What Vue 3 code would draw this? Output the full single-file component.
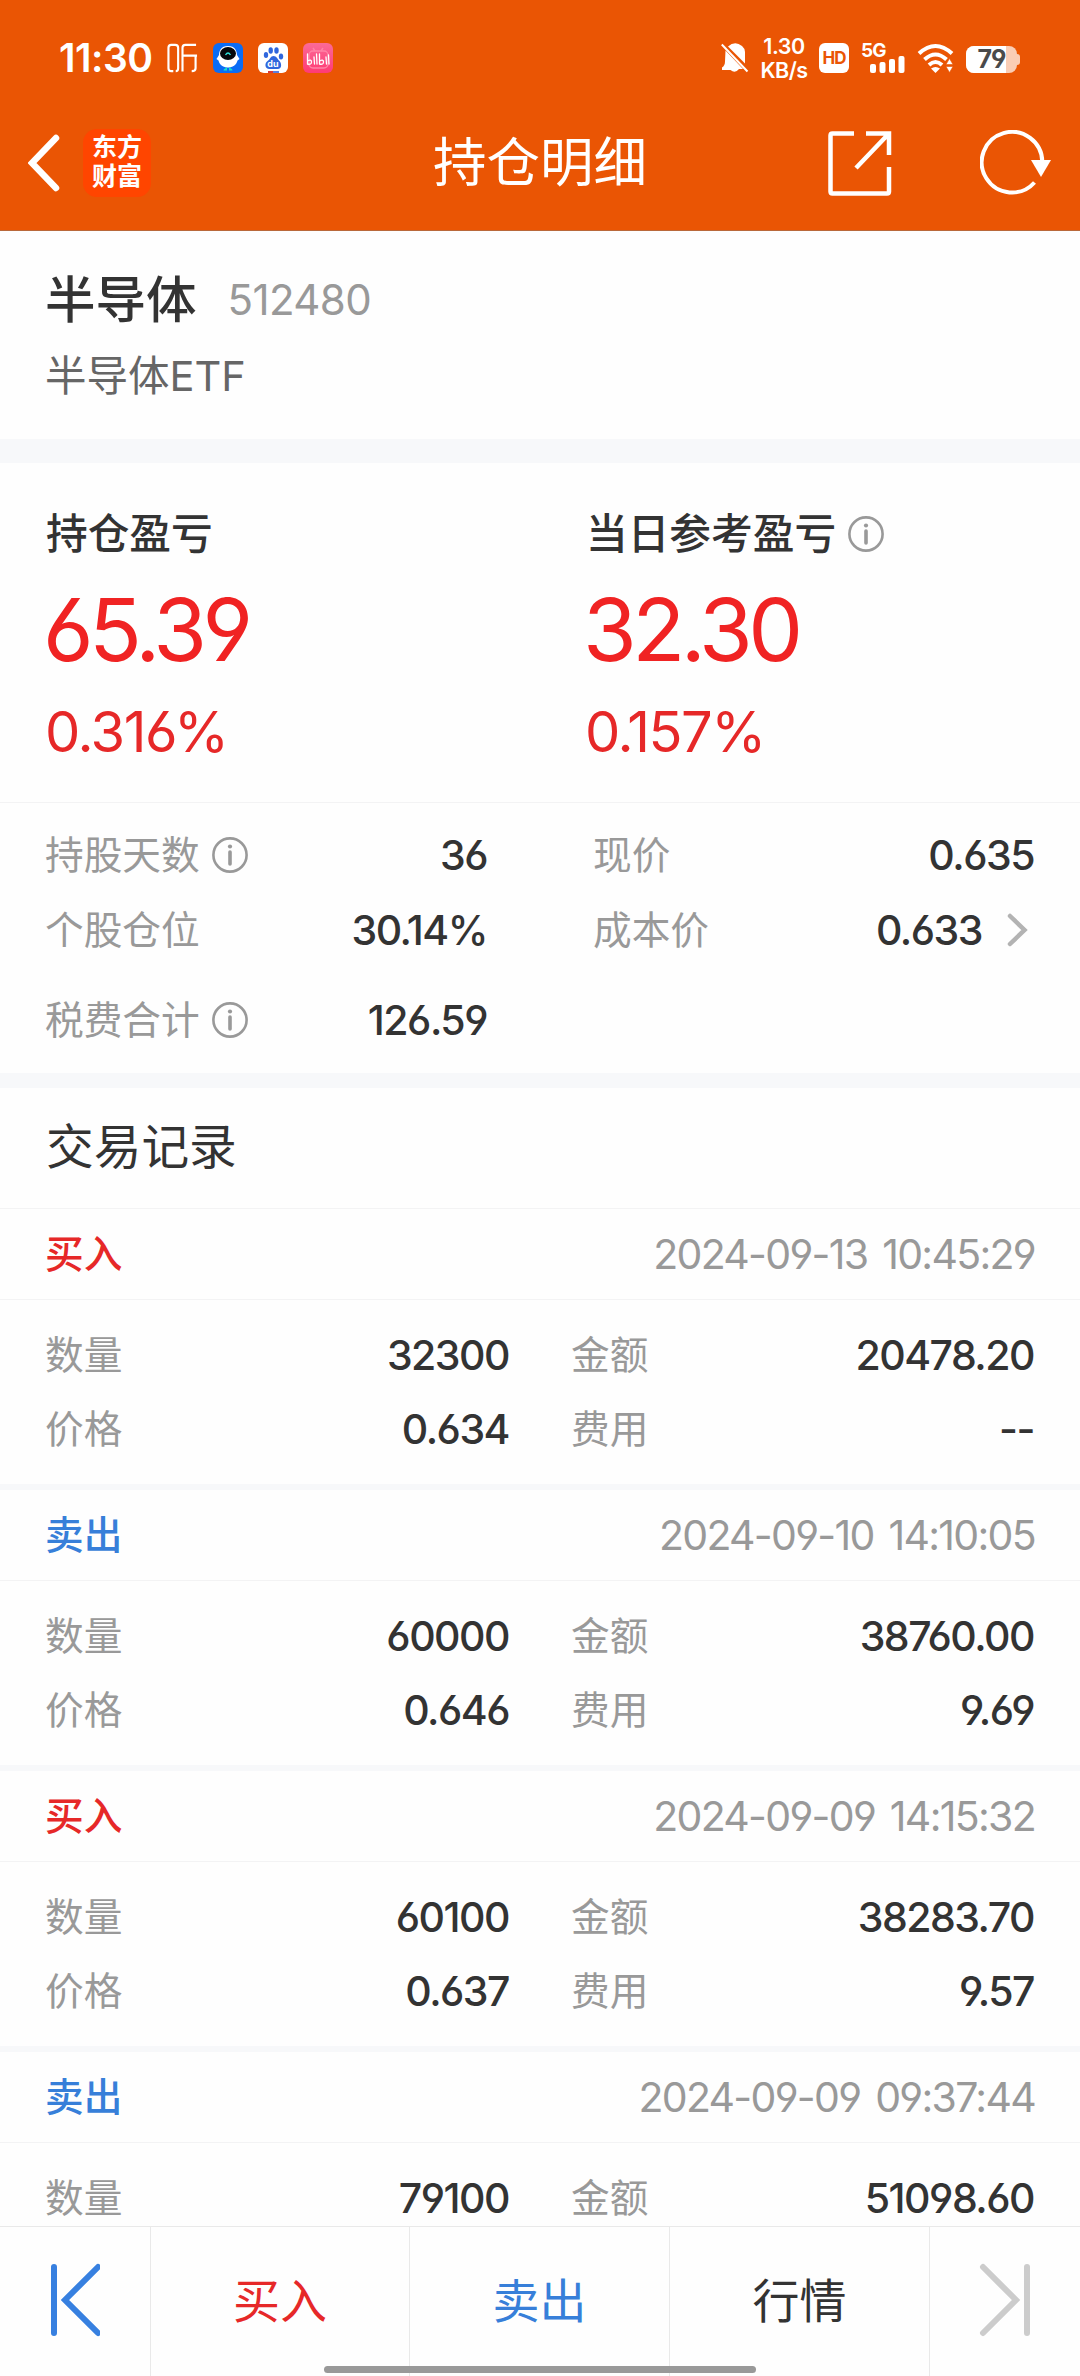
<template>
  <div class="page">
    <header class="header">
      <div class="status-bar">
        <span class="clock">11:30</span>
        <div class="status-apps">
          <svg class="listen" viewBox="0 0 32 30">
            <g fill="none" stroke="#fff" stroke-width="2.200">
              <path d="M4.500 1.500h4q3 0 3 3v21q0 3-2.500 3M4.500 1.500q-3 0-3 3v21q0 3 3 3h2" />
              <path d="M30 1.500H19q-3 0-3 3V29M16 12.500h15M29.500 12.500v13q0 3-4 3" />
            </g>
          </svg>
          <svg class="app-icon" viewBox="0 0 30 30">
            <rect width="30" height="30" rx="6" fill="#0a6cf5" />
            <path d="M15 3c7 0 9 5 9 9l2.500 4-2 1.500c-1 4.500-5 7-9.500 7s-8.500-2.500-9.500-7l-2-1.500L6 12c0-4 2-9 9-9z" fill="#fff" />
            <ellipse cx="15" cy="10.500" rx="8" ry="6.500" fill="#06080c" />
            <path d="M12.500 12q2.500-4 5 0" fill="none" stroke="#2fe0d8" stroke-width="1.300" />
            <path d="M10.500 27.500q0-2 2-2v-1H14v3zM19.500 27.500q0-2-2-2v-1H16v3z" fill="#16e0cc" />
          </svg>
          <svg class="app-icon" viewBox="0 0 30 30">
            <rect width="30" height="30" rx="6" fill="#fff" />
            <g fill="#2f66dd">
              <ellipse cx="8" cy="12" rx="2.200" ry="3" />
              <ellipse cx="12.700" cy="7.500" rx="2.200" ry="3.300" />
              <ellipse cx="18.500" cy="7.500" rx="2.200" ry="3.300" />
              <ellipse cx="23" cy="13.500" rx="2.200" ry="3" />
              <path d="M15.500 13c3 0 4 3 6 5s3 8-2 8h-8c-5 0-5-6-2-8s3-5 6-5z" />
            </g>
            <text x="15" y="23.500" text-anchor="middle" class="du">du</text>
            <rect x="10" y="28" width="5" height="2" fill="#d83a3a" />
            <rect x="15" y="28" width="6" height="2" fill="#5a7fe0" />
          </svg>
          <svg class="app-icon" viewBox="0 0 30 30">
            <defs>
              <linearGradient id="pink" x1="0" y1="0" x2="0" y2="1">
                <stop offset="0" stop-color="#fb6a97" />
                <stop offset="1" stop-color="#ff3a74" />
              </linearGradient>
            </defs>
            <rect width="30" height="30" rx="6" fill="url(#pink)" />
            <g fill="none" stroke="#ff82a6" stroke-width="1.500">
              <rect x="6" y="8" width="19" height="17" rx="4" />
              <path d="M10 5l2 3M20 5l-2 3" />
            </g>
            <g fill="none" stroke="#fff" stroke-width="1.300" stroke-linecap="round">
              <path d="M4.500 11v10q4 1 4-2t-4-1M11 14l.5 7M13.500 11l.5 10M16.500 11v10q4 1 4-2t-4-1M23 14l.5 7M25.500 12l.5 9" />
            </g>
          </svg>
        </div>
        <div class="status-icons">
          <svg width="28" height="32" viewBox="0 0 28 32">
            <path d="M4.500 8.500L22 27h-4Q14 32 9.500 28H1v-2.500q3-2 3-6z" fill="#fff" />
            <path d="M7 4.500Q14-1.500 21 4q3 2.500 3 6v11.500z" fill="#fff" />
            <path d="M.8 2.500L26.500 29.500" stroke="#fff" stroke-width="2" />
          </svg>
          <div class="net-speed">
            <span>1.30</span>
            <span>KB/s</span>
          </div>
          <span class="hd">HD</span>
          <div class="signal">
            <span class="signal-type">5G</span>
            <svg class="signal-bars" width="36" height="18" viewBox="0 0 36 18">
              <g fill="#fff">
                <rect x="0" y="9" width="6" height="9" rx="2" />
                <rect x="9.500" y="7" width="6" height="11" rx="2" />
                <rect x="19" y="4" width="6" height="14" rx="2" />
                <rect x="28.500" y="1" width="6" height="17" rx="2" />
              </g>
            </svg>
          </div>
          <svg width="37" height="30" viewBox="0 0 37 30">
            <g fill="none" stroke="#fff" stroke-width="4">
              <path d="M2 10.500Q18.500-4.500 35 10.500" />
              <path d="M7.500 16.500Q18.500 6.500 29.500 16.500" />
              <path d="M12 22Q18.500 16 25 22" />
            </g>
            <path d="M14 25.500q4.500-3 9 0L18.500 30z" fill="#fff" />
            <path d="M29 21.500l3.500-6 3.500 6zM29 23.500l3.500 6 3.500-6z" fill="#fff" stroke="#ea5504" stroke-width=".6" />
          </svg>
          <div class="battery">
            <div class="battery-body">
              <div class="battery-level" :style="{ width: batteryWidth }"></div>
              <span class="battery-text">{{ battery }}</span>
            </div>
            <i class="battery-cap"></i>
          </div>
        </div>
      </div>

      <div class="nav-bar">
        <div class="nav-left">
          <svg width="32" height="58" viewBox="0 0 32 58">
            <path d="M28 4L4 29l24 25" fill="none" stroke="#fff" stroke-width="6.500" stroke-linecap="round" />
          </svg>
          <div class="brand"><span>东方</span><span>财富</span></div>
        </div>
        <h1 class="nav-title">持仓明细</h1>
        <div class="nav-right">
          <svg width="64" height="65" viewBox="0 0 64 65">
            <g fill="none" stroke="#fff" stroke-width="4.500">
              <path d="M26 2.500H4.500q-2 0-2 2v56q0 2 2 2H59q2 0 2-2V36" />
              <path d="M38 2.500h23V24M60 3.500L28 37" />
            </g>
          </svg>
          <svg width="72" height="66" viewBox="0 0 72 66">
            <path d="M54.500 52.500A30.300 30.300 0 1 1 62.300 32" fill="none" stroke="#fff" stroke-width="4" />
            <path d="M51 30h20L61 47z" fill="#fff" />
          </svg>
        </div>
      </div>
    </header>

    <main class="content">
      <section class="stock">
        <div class="stock-line">
          <span class="stock-name">半导体</span>
          <span class="stock-code">512480</span>
        </div>
        <div class="stock-full">半导体ETF</div>
      </section>

      <section class="profit">
        <div v-for="p in profits" :key="p.label" class="profit-col">
          <div class="profit-label">
            <span>{{ p.label }}</span>
            <svg v-if="p.info" class="info" viewBox="0 0 36 36">
              <circle cx="18" cy="18" r="16.600" />
              <path d="M18 15v12" />
              <circle class="dot" cx="18" cy="9.500" r="2.100" />
            </svg>
          </div>
          <div class="profit-value">{{ p.value }}</div>
          <div class="profit-rate">{{ p.rate }}</div>
        </div>
      </section>

      <section class="stats">
        <div v-for="s in stats" :key="s.label" class="stat">
          <span class="label">{{ s.label }}</span>
          <svg v-if="s.info" class="info" viewBox="0 0 36 36">
            <circle cx="18" cy="18" r="16.600" />
            <path d="M18 15v12" />
            <circle class="dot" cx="18" cy="9.500" r="2.100" />
          </svg>
          <span class="value">{{ s.value }}</span>
          <svg v-if="s.link" class="arrow" viewBox="0 0 24 34">
            <path d="M3 3l14.500 14L3 31" />
          </svg>
        </div>
      </section>

      <h2 class="records-title">交易记录</h2>
      <section v-for="r in records" :key="r.time" class="record">
        <div class="record-head">
          <span class="side" :class="r.side">{{ r.side === 'buy' ? '买入' : '卖出' }}</span>
          <span class="time">{{ r.time }}</span>
        </div>
        <div class="record-body">
          <div class="cell"><span class="label">数量</span><span class="value">{{ r.count }}</span></div>
          <div class="cell"><span class="label">金额</span><span class="value">{{ r.amount }}</span></div>
          <template v-if="r.price">
            <div class="cell"><span class="label">价格</span><span class="value">{{ r.price }}</span></div>
            <div class="cell"><span class="label">费用</span><span class="value">{{ r.fee }}</span></div>
          </template>
        </div>
      </section>
    </main>

    <footer class="footer">
      <button class="tab tab-prev">
        <svg width="50" height="74" viewBox="0 0 50 74">
          <path d="M4 4v66M48 4L15 37l33 33" />
        </svg>
      </button>
      <button class="tab buy">买入</button>
      <button class="tab sell">卖出</button>
      <button class="tab">行情</button>
      <button class="tab tab-next">
        <svg width="52" height="74" viewBox="0 0 52 74">
          <path d="M48 4v66M4 4l33 33L4 70" />
        </svg>
      </button>
      <i class="home-bar"></i>
    </footer>
  </div>
</template>

<script setup>
import { computed, ref } from 'vue'

const battery = ref(79)
const batteryWidth = computed(() => `${battery.value}%`)

const profits = [
  { label: '持仓盈亏', value: '65.39', rate: '0.316%' },
  { label: '当日参考盈亏', value: '32.30', rate: '0.157%', info: true }
]

const stats = [
  { label: '持股天数', value: '36', info: true },
  { label: '现价', value: '0.635' },
  { label: '个股仓位', value: '30.14%' },
  { label: '成本价', value: '0.633', link: true },
  { label: '税费合计', value: '126.59', info: true }
]

const records = [
  { side: 'buy', time: '2024-09-13 10:45:29', count: '32300', amount: '20478.20', price: '0.634', fee: '--' },
  { side: 'sell', time: '2024-09-10 14:10:05', count: '60000', amount: '38760.00', price: '0.646', fee: '9.69' },
  { side: 'buy', time: '2024-09-09 14:15:32', count: '60100', amount: '38283.70', price: '0.637', fee: '9.57' },
  { side: 'sell', time: '2024-09-09 09:37:44', count: '79100', amount: '51098.60' }
]
</script>

<style>
body { margin: 0; background: #fff; }
</style>

<style scoped>
.page {
  width: 1080px; height: 2376px; display: flex; flex-direction: column; overflow: hidden;
  background: #fefefe; color: #333;
  font-family: Inter, "Noto Sans CJK SC", sans-serif;
  font-feature-settings: "cv03", "cv04";
}
.page * { box-sizing: border-box; }
svg { display: block; flex: none; }

/* header */
.header { height: 231px; flex: none; background: #ea5504; color: #fff; border-bottom: 1px solid #b9683a; }
.status-bar { display: flex; align-items: center; height: 96px; padding: 20px 60px 0 59px; }
.clock { width: 108px; padding-bottom: 2px; font-size: 39px; font-weight: 600; letter-spacing: -0.5px; }
.status-apps { display: flex; align-items: center; gap: 15px; }
.listen { width: 31px; height: 30px; }
.app-icon { width: 30px; height: 30px; }
.du { fill: #fff; font-size: 9px; font-weight: 700; }
.status-icons { display: flex; align-items: center; gap: 12px; margin-left: auto; }
.net-speed {
  width: 46px; display: flex; flex-direction: column; align-items: center;
  font-size: 21.500px; line-height: 24px; font-weight: 600; letter-spacing: -0.5px;
}
.hd {
  width: 30px; height: 30px; border-radius: 6px; background: #fff; color: #ea5504;
  font-size: 17px; line-height: 31px; font-weight: 700; text-align: center; letter-spacing: -1px;
}
.signal { width: 44px; height: 30px; position: relative; }
.signal-type { position: absolute; left: 0; top: -1px; font-size: 19px; line-height: 18px; font-weight: 700; letter-spacing: -1px; }
.signal-bars { position: absolute; left: 9px; bottom: 0; }
.battery { display: flex; align-items: center; width: 54px; padding-top: 3px; }
.battery-body { position: relative; width: 51px; height: 27px; border-radius: 8px; background: #facdb5; }
.battery-level { height: 100%; background: #fff; border-radius: 8px 0 0 8px; }
.battery-text {
  position: absolute; inset: 0; line-height: 27px; text-align: center;
  color: #4a4a4a; font-size: 25px; font-weight: 700; letter-spacing: -1px;
}
.battery-cap { width: 3px; height: 11px; background: #facdb5; border-radius: 0 3px 3px 0; }

.nav-bar { display: grid; grid-template-columns: 1fr auto 1fr; align-items: center; height: 134px; padding: 0 28px; }
.nav-left { display: flex; align-items: center; gap: 23px; }
.brand {
  width: 68px; height: 68px; border-radius: 14px; background: #ff4500;
  display: flex; flex-direction: column; align-items: center; justify-content: center;
  font-size: 25px; line-height: 29px; font-weight: 700; padding-bottom: 2px;
}
.nav-title { margin: 0; font-size: 53.500px; line-height: 70px; font-weight: 400; }
.nav-right { display: flex; align-items: center; justify-content: flex-end; gap: 88px; }

/* stock */
.stock { height: 232px; padding: 33px 45px 0; border-bottom: 24px solid #f7f8fa; }
.stock-line { display: flex; align-items: center; height: 70px; }
.stock-name { padding-bottom: 6px; font-size: 50.500px; font-weight: 500; }
.stock-code { margin-left: 31px; font-size: 42px; color: #999; letter-spacing: -0.6px; }
.stock-full { height: 84px; line-height: 84px; font-size: 41.500px; color: #666; }

/* profit */
.profit { display: grid; grid-template-columns: 540px 1fr; height: 340px; padding: 43px 0 0 46px; border-bottom: 1px solid #f3f3f4; }
.profit-label { display: flex; align-items: center; gap: 12px; height: 56px; font-size: 41.700px; font-weight: 500; }
.profit-label span { padding-bottom: 6px; }
.profit-value { height: 136px; line-height: 136px; margin-left: -3px; font-size: 87px; color: #f02323; letter-spacing: -4.500px; }
.profit-rate { height: 68px; line-height: 68px; margin-left: -1px; font-size: 56px; color: #e62828; letter-spacing: -1.500px; }
.info { width: 36px; height: 36px; fill: none; stroke: #999; stroke-width: 2.600; stroke-linecap: round; }
.info path { stroke-width: 3.600; }
.info .dot { fill: #999; stroke: none; }

/* stats */
.stats {
  display: grid; grid-template-columns: 442px 441px; grid-template-rows: 75px 75px 105px; column-gap: 106px;
  height: 285px; padding: 14px 45px 0; border-bottom: 15px solid #f7f8fa;
}
.stat { display: flex; align-items: center; }
.stat .info { margin-left: 12px; }
.label { padding-bottom: 6px; font-size: 38.700px; color: #999; }
.value { margin-left: auto; font-size: 41px; font-weight: 500; letter-spacing: -1.500px; }
.arrow { width: 24px; height: 34px; margin-left: 25px; margin-right: 3px; fill: none; stroke: #b3b3b3; stroke-width: 4.500; stroke-linecap: round; }

/* records */
.records-title { margin: 0; height: 121px; line-height: 118px; padding-left: 46px; font-size: 47.700px; font-weight: 400; border-bottom: 1px solid #f3f3f4; }
.record { height: 281px; border-bottom: 6px solid #f7f8fa; }
.record-head { display: flex; align-items: center; justify-content: space-between; height: 91px; padding: 0 45px; border-bottom: 1px solid #f3f3f4; }
.side { padding-bottom: 6px; font-size: 38.700px; font-weight: 500; }
.time { font-size: 41px; color: #999; letter-spacing: -1.700px; word-spacing: 5px; }
.record-body { display: grid; grid-template-columns: 464px 463px; grid-template-rows: 74px 74px; column-gap: 62px; padding: 18px 45px 0; }
.cell { display: flex; align-items: center; }
.buy { color: #e62828; }
.sell { color: #377fd9; }

/* footer */
.content { flex: 1; min-height: 0; overflow: hidden; }
.footer {
  position: relative; flex: none; height: 150px; display: grid; grid-template-columns: 151px 259px 260px 260px 150px;
  border-top: 1px solid #e9e9e9; background: #fefefe;
}
.tab {
  display: flex; align-items: center; justify-content: center; padding: 0 0 8px; border: none; border-right: 1px solid #e9e9e9;
  background: none; font-family: inherit; font-size: 47px; color: #333;
}
.tab.buy { color: #e62828; }
.tab.sell { color: #377fd9; }
.tab svg { fill: none; stroke: #3780e0; stroke-width: 6; stroke-linecap: round; }
.tab-prev, .tab-next { padding-bottom: 3px; }
.tab-next { border-right: none; }
.tab-next svg { stroke: #ccc; }
.home-bar { position: absolute; left: 324px; bottom: 3px; width: 432px; height: 7px; border-radius: 4px; background: #999; }
</style>
